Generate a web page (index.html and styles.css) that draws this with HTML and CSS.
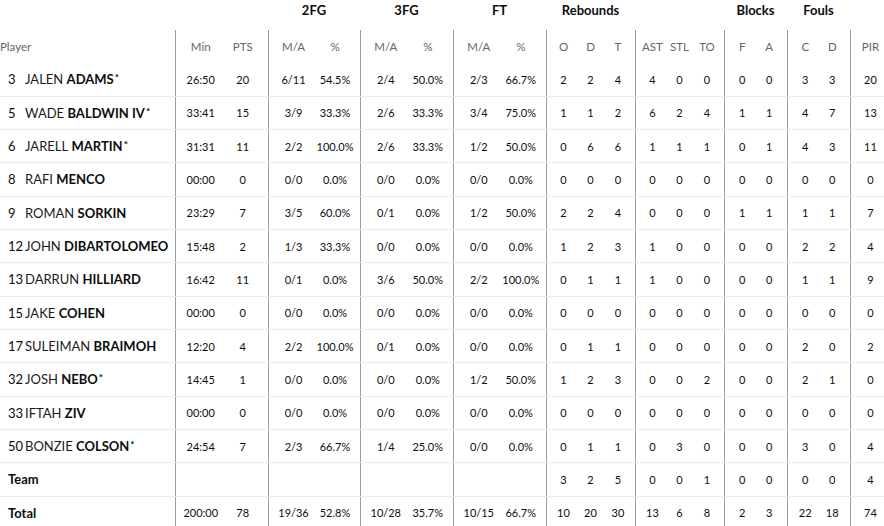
FILE: index.html
```html
<!DOCTYPE html>
<html lang="en">
<head>
<meta charset="utf-8">
<title>Box score</title>
<link rel="stylesheet" href="styles.css">
</head>
<body>
<div class="board">
  <div class="groups">
    <div></div><div></div><div>2FG</div><div>3FG</div><div>FT</div><div>Rebounds</div><div></div><div>Blocks</div><div>Fouls</div><div></div>
  </div>
  <div class="row head">
    <div class="c player">Player</div>
    <div class="c gs">Min</div><div class="c ge">PTS</div>
    <div class="c gs">M/A</div><div class="c ge">%</div>
    <div class="c gs">M/A</div><div class="c ge">%</div>
    <div class="c gs">M/A</div><div class="c ge">%</div>
    <div class="c gs">O</div><div class="c">D</div><div class="c ge">T</div>
    <div class="c gs">AST</div><div class="c">STL</div><div class="c ge">TO</div>
    <div class="c gs">F</div><div class="c ge">A</div>
    <div class="c gs">C</div><div class="c ge">D</div>
    <div class="c gs">PIR</div>
  </div>

  <div class="row">
    <div class="c player"><span class="num">3</span><span class="first">JALEN</span>&nbsp;<b>ADAMS</b><sup>*</sup></div>
    <div class="c gs">26:50</div><div class="c ge">20</div>
    <div class="c gs">6/11</div><div class="c ge">54.5%</div>
    <div class="c gs">2/4</div><div class="c ge">50.0%</div>
    <div class="c gs">2/3</div><div class="c ge">66.7%</div>
    <div class="c gs">2</div><div class="c">2</div><div class="c ge">4</div>
    <div class="c gs">4</div><div class="c">0</div><div class="c ge">0</div>
    <div class="c gs">0</div><div class="c ge">0</div>
    <div class="c gs">3</div><div class="c ge">3</div>
    <div class="c gs">20</div>
  </div>

  <div class="row">
    <div class="c player"><span class="num">5</span><span class="first">WADE</span>&nbsp;<b>BALDWIN IV</b><sup>*</sup></div>
    <div class="c gs">33:41</div><div class="c ge">15</div>
    <div class="c gs">3/9</div><div class="c ge">33.3%</div>
    <div class="c gs">2/6</div><div class="c ge">33.3%</div>
    <div class="c gs">3/4</div><div class="c ge">75.0%</div>
    <div class="c gs">1</div><div class="c">1</div><div class="c ge">2</div>
    <div class="c gs">6</div><div class="c">2</div><div class="c ge">4</div>
    <div class="c gs">1</div><div class="c ge">1</div>
    <div class="c gs">4</div><div class="c ge">7</div>
    <div class="c gs">13</div>
  </div>

  <div class="row">
    <div class="c player"><span class="num">6</span><span class="first">JARELL</span>&nbsp;<b>MARTIN</b><sup>*</sup></div>
    <div class="c gs">31:31</div><div class="c ge">11</div>
    <div class="c gs">2/2</div><div class="c ge">100.0%</div>
    <div class="c gs">2/6</div><div class="c ge">33.3%</div>
    <div class="c gs">1/2</div><div class="c ge">50.0%</div>
    <div class="c gs">0</div><div class="c">6</div><div class="c ge">6</div>
    <div class="c gs">1</div><div class="c">1</div><div class="c ge">1</div>
    <div class="c gs">0</div><div class="c ge">1</div>
    <div class="c gs">4</div><div class="c ge">3</div>
    <div class="c gs">11</div>
  </div>

  <div class="row">
    <div class="c player"><span class="num">8</span><span class="first">RAFI</span>&nbsp;<b>MENCO</b></div>
    <div class="c gs">00:00</div><div class="c ge">0</div>
    <div class="c gs">0/0</div><div class="c ge">0.0%</div>
    <div class="c gs">0/0</div><div class="c ge">0.0%</div>
    <div class="c gs">0/0</div><div class="c ge">0.0%</div>
    <div class="c gs">0</div><div class="c">0</div><div class="c ge">0</div>
    <div class="c gs">0</div><div class="c">0</div><div class="c ge">0</div>
    <div class="c gs">0</div><div class="c ge">0</div>
    <div class="c gs">0</div><div class="c ge">0</div>
    <div class="c gs">0</div>
  </div>

  <div class="row">
    <div class="c player"><span class="num">9</span><span class="first">ROMAN</span>&nbsp;<b>SORKIN</b></div>
    <div class="c gs">23:29</div><div class="c ge">7</div>
    <div class="c gs">3/5</div><div class="c ge">60.0%</div>
    <div class="c gs">0/1</div><div class="c ge">0.0%</div>
    <div class="c gs">1/2</div><div class="c ge">50.0%</div>
    <div class="c gs">2</div><div class="c">2</div><div class="c ge">4</div>
    <div class="c gs">0</div><div class="c">0</div><div class="c ge">0</div>
    <div class="c gs">1</div><div class="c ge">1</div>
    <div class="c gs">1</div><div class="c ge">1</div>
    <div class="c gs">7</div>
  </div>

  <div class="row">
    <div class="c player"><span class="num">12</span><span class="first">JOHN</span>&nbsp;<b>DIBARTOLOMEO</b></div>
    <div class="c gs">15:48</div><div class="c ge">2</div>
    <div class="c gs">1/3</div><div class="c ge">33.3%</div>
    <div class="c gs">0/0</div><div class="c ge">0.0%</div>
    <div class="c gs">0/0</div><div class="c ge">0.0%</div>
    <div class="c gs">1</div><div class="c">2</div><div class="c ge">3</div>
    <div class="c gs">1</div><div class="c">0</div><div class="c ge">0</div>
    <div class="c gs">0</div><div class="c ge">0</div>
    <div class="c gs">2</div><div class="c ge">2</div>
    <div class="c gs">4</div>
  </div>

  <div class="row">
    <div class="c player"><span class="num">13</span><span class="first">DARRUN</span>&nbsp;<b>HILLIARD</b></div>
    <div class="c gs">16:42</div><div class="c ge">11</div>
    <div class="c gs">0/1</div><div class="c ge">0.0%</div>
    <div class="c gs">3/6</div><div class="c ge">50.0%</div>
    <div class="c gs">2/2</div><div class="c ge">100.0%</div>
    <div class="c gs">0</div><div class="c">1</div><div class="c ge">1</div>
    <div class="c gs">1</div><div class="c">0</div><div class="c ge">0</div>
    <div class="c gs">0</div><div class="c ge">0</div>
    <div class="c gs">1</div><div class="c ge">1</div>
    <div class="c gs">9</div>
  </div>

  <div class="row">
    <div class="c player"><span class="num">15</span><span class="first">JAKE</span>&nbsp;<b>COHEN</b></div>
    <div class="c gs">00:00</div><div class="c ge">0</div>
    <div class="c gs">0/0</div><div class="c ge">0.0%</div>
    <div class="c gs">0/0</div><div class="c ge">0.0%</div>
    <div class="c gs">0/0</div><div class="c ge">0.0%</div>
    <div class="c gs">0</div><div class="c">0</div><div class="c ge">0</div>
    <div class="c gs">0</div><div class="c">0</div><div class="c ge">0</div>
    <div class="c gs">0</div><div class="c ge">0</div>
    <div class="c gs">0</div><div class="c ge">0</div>
    <div class="c gs">0</div>
  </div>

  <div class="row">
    <div class="c player"><span class="num">17</span><span class="first">SULEIMAN</span>&nbsp;<b>BRAIMOH</b></div>
    <div class="c gs">12:20</div><div class="c ge">4</div>
    <div class="c gs">2/2</div><div class="c ge">100.0%</div>
    <div class="c gs">0/1</div><div class="c ge">0.0%</div>
    <div class="c gs">0/0</div><div class="c ge">0.0%</div>
    <div class="c gs">0</div><div class="c">1</div><div class="c ge">1</div>
    <div class="c gs">0</div><div class="c">0</div><div class="c ge">0</div>
    <div class="c gs">0</div><div class="c ge">0</div>
    <div class="c gs">2</div><div class="c ge">0</div>
    <div class="c gs">2</div>
  </div>

  <div class="row">
    <div class="c player"><span class="num">32</span><span class="first">JOSH</span>&nbsp;<b>NEBO</b><sup>*</sup></div>
    <div class="c gs">14:45</div><div class="c ge">1</div>
    <div class="c gs">0/0</div><div class="c ge">0.0%</div>
    <div class="c gs">0/0</div><div class="c ge">0.0%</div>
    <div class="c gs">1/2</div><div class="c ge">50.0%</div>
    <div class="c gs">1</div><div class="c">2</div><div class="c ge">3</div>
    <div class="c gs">0</div><div class="c">0</div><div class="c ge">2</div>
    <div class="c gs">0</div><div class="c ge">0</div>
    <div class="c gs">2</div><div class="c ge">1</div>
    <div class="c gs">0</div>
  </div>

  <div class="row">
    <div class="c player"><span class="num">33</span><span class="first">IFTAH</span>&nbsp;<b>ZIV</b></div>
    <div class="c gs">00:00</div><div class="c ge">0</div>
    <div class="c gs">0/0</div><div class="c ge">0.0%</div>
    <div class="c gs">0/0</div><div class="c ge">0.0%</div>
    <div class="c gs">0/0</div><div class="c ge">0.0%</div>
    <div class="c gs">0</div><div class="c">0</div><div class="c ge">0</div>
    <div class="c gs">0</div><div class="c">0</div><div class="c ge">0</div>
    <div class="c gs">0</div><div class="c ge">0</div>
    <div class="c gs">0</div><div class="c ge">0</div>
    <div class="c gs">0</div>
  </div>

  <div class="row">
    <div class="c player"><span class="num">50</span><span class="first">BONZIE</span>&nbsp;<b>COLSON</b><sup>*</sup></div>
    <div class="c gs">24:54</div><div class="c ge">7</div>
    <div class="c gs">2/3</div><div class="c ge">66.7%</div>
    <div class="c gs">1/4</div><div class="c ge">25.0%</div>
    <div class="c gs">0/0</div><div class="c ge">0.0%</div>
    <div class="c gs">0</div><div class="c">1</div><div class="c ge">1</div>
    <div class="c gs">0</div><div class="c">3</div><div class="c ge">0</div>
    <div class="c gs">0</div><div class="c ge">0</div>
    <div class="c gs">3</div><div class="c ge">0</div>
    <div class="c gs">4</div>
  </div>

  <div class="row">
    <div class="c player"><b class="label">Team</b></div>
    <div class="c gs"></div><div class="c ge"></div>
    <div class="c gs"></div><div class="c ge"></div>
    <div class="c gs"></div><div class="c ge"></div>
    <div class="c gs"></div><div class="c ge"></div>
    <div class="c gs">3</div><div class="c">2</div><div class="c ge">5</div>
    <div class="c gs">0</div><div class="c">0</div><div class="c ge">1</div>
    <div class="c gs">0</div><div class="c ge">0</div>
    <div class="c gs">0</div><div class="c ge">0</div>
    <div class="c gs">4</div>
  </div>

  <div class="row">
    <div class="c player"><b class="label">Total</b></div>
    <div class="c gs">200:00</div><div class="c ge">78</div>
    <div class="c gs">19/36</div><div class="c ge">52.8%</div>
    <div class="c gs">10/28</div><div class="c ge">35.7%</div>
    <div class="c gs">10/15</div><div class="c ge">66.7%</div>
    <div class="c gs">10</div><div class="c">20</div><div class="c ge">30</div>
    <div class="c gs">13</div><div class="c">6</div><div class="c ge">8</div>
    <div class="c gs">2</div><div class="c ge">3</div>
    <div class="c gs">22</div><div class="c ge">18</div>
    <div class="c gs">74</div>
  </div>
</div>
</body>
</html>
```

FILE: styles.css
```css
html, body {
  margin: 0;
  padding: 0;
  background: #ffffff;
  overflow: hidden;
}

body {
  font-family: Lato, "Liberation Sans", sans-serif;
  color: #0d0d0d;
}

.board {
  margin-left: -8px;
  width: 894px;
}

.groups {
  display: grid;
  grid-template-columns: 183px 93px 92px 93px 93px 89px 89px 63px 63px 36px;
  height: 30px;
  box-sizing: border-box;
  padding-top: 2px;
}

.groups div {
  text-align: center;
  font-weight: 700;
  font-size: 13px;
  line-height: 16px;
  color: #0d0d0d;
}

.row {
  display: grid;
  grid-template-columns:
    183px
    46.5px 46.5px
    46px 46px
    46.5px 46.5px
    46.5px 46.5px
    30px 29px 30px
    30px 29px 30px
    31.5px 31.5px
    31.5px 31.5px
    36px;
  height: 33.333px;
  box-sizing: border-box;
  border-bottom: 1px solid #ebebeb;
}

.row.head {
  border-bottom: none;
}

.c {
  display: flex;
  align-items: center;
  justify-content: center;
  box-sizing: border-box;
  font-size: 11px;
  white-space: nowrap;
  min-width: 0;
}

.head .c {
  color: #666666;
  font-size: 11.5px;
}

.c.gs {
  border-left: 1px solid #9c9c9c;
  padding-left: 4px;
}

.c.ge {
  padding-right: 4px;
}

.c.player {
  justify-content: flex-start;
  padding-left: 16px;
  font-size: 13px;
}

.head .c.player {
  padding-left: 8px;
  font-size: 11.5px;
}

.num {
  display: inline-block;
  width: 17px;
}

.first {
  font-weight: 400;
  color: #1a1a1a;
}

.player b {
  font-weight: 700;
  color: #0d0d0d;
}

.player sup {
  font-size: 10px;
  line-height: 10px;
  font-weight: 700;
  align-self: flex-start;
  margin-top: 9px;
  margin-left: 1px;
}

.player .label {
  font-size: 13px;
}
```
